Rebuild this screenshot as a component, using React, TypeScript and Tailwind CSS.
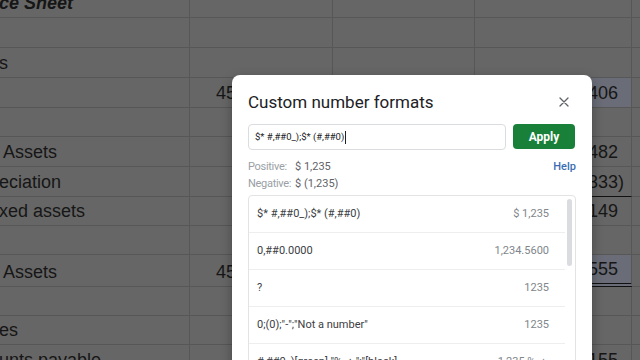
import React from "react";

type Cell = { a?: string; aPl?: number; b?: string; d?: string; dNeg?: boolean; hl?: boolean; under?: "single" | "double" };

const rows: { h: number; c: Cell }[] = [
  { h: 18, c: { a: "ce Sheet" } },
  { h: 30, c: {} },
  { h: 30, c: { a: "s" } },
  { h: 30, c: { b: "45", d: "406", hl: true } },
  { h: 29, c: {} },
  { h: 30, c: { a: "Assets", aPl: 4, d: "482" } },
  { h: 30, c: { a: "eciation", d: "(333)", dNeg: true, under: "single" } },
  { h: 29, c: { a: "xed assets", d: "149" } },
  { h: 29, c: {} },
  { h: 32, c: { a: "Assets", aPl: 4, b: "45", d: "555", hl: true, under: "double" } },
  { h: 29, c: {} },
  { h: 29, c: { a: "es" } },
  { h: 30, c: { a: "unts payable", d: "155" } },
];

const formats: [string, string][] = [
  ["$* #,##0_);$* (#,##0)", "$ 1,235"],
  ["0,##0.0000", "1,234.5600"],
  ["?", "1235"],
  ['0;(0);"-";"Not a number"', "1235"],
  ['#,##0_)[green]  "% ▲";"[black]', "1,235 % ▲"],
];

function Sheet() {
  return (
    <div className="flex flex-col" style={{ fontFamily: '"Liberation Sans", Arial, sans-serif' }}>
      {rows.map((r, i) => {
        const c = r.c;
        const txt = "flex items-end pb-[5px] text-[18px] leading-[18px] text-[#161616] whitespace-nowrap overflow-hidden";
        return (
          <div key={i} className="flex shrink-0" style={{ height: r.h }}>
            <div className={`${txt} w-[190px] border-r border-b border-[#575757]`}>
              {c.a && (
                <span className={i === 0 ? "font-bold italic" : ""} style={{ paddingLeft: c.aPl ?? 0, marginLeft: -1 }}>
                  {c.a}
                </span>
              )}
            </div>
            <div className={`${txt} w-[143px] border-r border-b border-[#575757] pl-[26px]`}>{c.b}</div>
            <div className={`${txt} w-[142px] border-r border-b border-[#575757]`}></div>
            <div
              className={`${txt} w-[157px] border-r justify-end pr-[7px] ${c.hl ? "bg-[#6a6d77]" : ""} ${
                c.under === "single"
                  ? "border-b border-b-[#111]"
                  : c.under === "double"
                  ? "border-b-[4px] border-double border-b-[#111]"
                  : "border-b"
              } border-r-[#575757] ${c.under ? "" : "border-b-[#575757]"}`}
            >
              {c.d && (
                <span>
                  {c.d}
                  {!c.dNeg && <span className="invisible">)</span>}
                </span>
              )}
            </div>
            <div className={`${txt} flex-1 border-b border-[#575757]`}></div>
          </div>
        );
      })}
    </div>
  );
}

function Dialog() {
  return (
    <div
      className="absolute left-[232px] top-[75px] w-[360px] h-[320px] bg-white rounded-[8px] shadow-[0_4px_12px_rgba(0,0,0,0.3)] px-[16px] pt-[15px]"
      style={{ fontFamily: 'Roboto, "Noto Sans", Arial, sans-serif' }}
    >
      <div className="flex items-center justify-between h-[24px]">
        <div className="text-[17px] leading-[24px] text-[#202124]">Custom number formats</div>
        <button className="w-[24px] h-[24px] flex items-center justify-center">
          <svg width="10" height="10" viewBox="0 0 10 10">
            <path d="M1 1L9 9M9 1L1 9" stroke="#5f6368" strokeWidth="1.3" strokeLinecap="round" />
          </svg>
        </button>
      </div>
      <div className="flex gap-[7px] mt-[10px]">
        <div className="w-[258px] h-[26px] border border-[#dadce0] rounded-[4px] flex items-center pl-[6px] text-[9.5px] text-[#202124]">
          <span>$* #,##0_);$* (#,##0)</span>
          <span className="w-px h-[13px] bg-[#202124] ml-px"></span>
        </div>
        <button className="w-[62px] h-[25px] bg-[#188038] rounded-[4px] text-white text-[12px] font-bold flex items-center justify-center">
          Apply
        </button>
      </div>
      <div className="flex justify-between mt-[8px] text-[11px] leading-[17px]">
        <div className="flex flex-col">
          <div className="flex">
            <span className="w-[47px] text-[#9aa0a6] tracking-[-0.3px]">Positive:</span>
            <span className="text-[#5f6368]">$ 1,235</span>
          </div>
          <div className="flex">
            <span className="w-[47px] text-[#9aa0a6] tracking-[-0.3px]">Negative:</span>
            <span className="text-[#5f6368]">$ (1,235)</span>
          </div>
        </div>
        <div className="text-[#3b6db3] font-medium">Help</div>
      </div>
      <div className="mt-[3px] border border-[#e3e3e3] rounded-t-[4px] flex h-[200px]">
        <div className="flex-1 flex flex-col">
          {formats.map(([f, v], i) => (
            <div key={i} className="h-[37px] shrink-0 border-b border-[#eeeeee] flex items-center justify-between pl-[8px] pr-[16px] text-[11px]">
              <span className="text-[#3c4043] whitespace-nowrap">{f}</span>
              <span className="text-[#80868b] whitespace-nowrap">{v}</span>
            </div>
          ))}
        </div>
        <div className="w-[10px] pt-[3px] pl-[2px]">
          <div className="w-[5px] h-[67px] rounded-full bg-[#dadce0]"></div>
        </div>
      </div>
    </div>
  );
}

export default function App() {
  return (
    <div className="relative w-[640px] h-[360px] overflow-hidden bg-[#666666]">
      <Sheet />
      <Dialog />
    </div>
  );
}
